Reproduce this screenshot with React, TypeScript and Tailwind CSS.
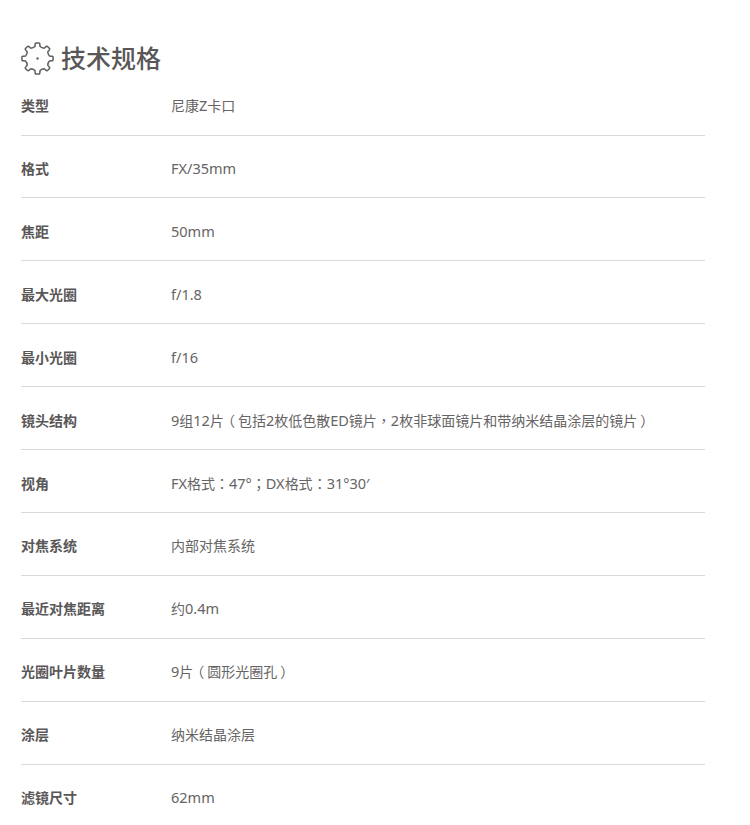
import type { ReactNode } from "react";

const PUNCT = "font-['Noto_Sans_CJK_TC',sans-serif]";

const P = ({ c }: { c: string }) => <span className={PUNCT}>{c}</span>;
const L = () => (
  <span className={`${PUNCT} [font-feature-settings:'halt'] ml-[4px] mr-[3px]`}>（</span>
);
const R = () => (
  <span className={`${PUNCT} [font-feature-settings:'halt'] ml-[3px] mr-[4px]`}>）</span>
);

// Latin runs sit slightly larger than the CJK around them in the reference.
const T = ({ s }: { s: string }) => (
  <>
    {s.split(/([\x20-\x7e°′]+)/).map((part, i) =>
      i % 2 === 1 ? (
        <span key={i} className="text-[14.5px]">
          {part}
        </span>
      ) : (
        part
      ),
    )}
  </>
);

const rows: [string, ReactNode][] = [
  ["类型", <T s="尼康Z卡口" />],
  ["格式", <T s="FX/35mm" />],
  ["焦距", <T s="50mm" />],
  ["最大光圈", <T s="f/1.8" />],
  ["最小光圈", <T s="f/16" />],
  ["镜头结构", <><T s="9组12片" /><L /><T s="包括2枚低色散ED镜片" /><P c="，" /><T s="2枚非球面镜片和带纳米结晶涂层的镜片" /><R /></>],
  ["视角", <><T s="FX格式" /><P c="：" /><T s="47°" /><P c="；" /><T s="DX格式" /><P c="：" /><T s="31°30′" /></>],
  ["对焦系统", "内部对焦系统"],
  ["最近对焦距离", <T s="约0.4m" />],
  ["光圈叶片数量", <><T s="9片" /><L />圆形光圈孔<R /></>],
  ["涂层", "纳米结晶涂层"],
  ["滤镜尺寸", <T s="62mm" />],
];

function gearPath() {
  const teeth = 8;
  const c = 16.5;
  const step = (2 * Math.PI) / teeth;
  const at = (r: number, t: number) =>
    `${(c + r * Math.cos(t)).toFixed(2)} ${(c + r * Math.sin(t)).toFixed(2)}`;
  const out: string[] = [];
  for (let i = 0; i < teeth; i++) {
    const a = i * step - Math.PI / 2;
    out.push(`${i === 0 ? "M" : "L"}${at(12.2, a - step * 0.27)}`);
    out.push(`L${at(14.2, a - step * 0.21)}`);
    out.push(`Q${at(15.9, a - step * 0.2)} ${at(15.6, a - step * 0.08)}`);
    out.push(`L${at(15.6, a + step * 0.08)}`);
    out.push(`Q${at(15.9, a + step * 0.2)} ${at(14.2, a + step * 0.21)}`);
    out.push(`L${at(12.2, a + step * 0.27)}`);
    out.push(`Q${at(11.2, a + step * 0.5)} ${at(12.2, a + step * 0.73)}`);
  }
  return out.join(" ") + "Z";
}

export default function App() {
  return (
    <div className="w-[750px] h-[825px] overflow-hidden bg-white pl-[21px] pr-[45px] pt-[40px] text-[#666464] font-['Noto_Sans','Noto_Sans_CJK_SC',sans-serif]">
      <div className="flex items-center h-[36px] gap-[7px]">
        <svg width="33" height="33" viewBox="0 0 33 33" fill="none" stroke="#5f5d5d" strokeWidth="1.5" strokeLinejoin="round">
          <path d={gearPath()} />
          <circle cx="16.5" cy="16.5" r="1.2" fill="#666464" stroke="none" />
        </svg>
        <h2 className="text-[25px] leading-[36px] font-medium text-[#595757]">技术规格</h2>
      </div>
      <div>
        {rows.map(([k, v], i) => (
          <div
            key={k}
            className={`flex items-center text-[14px] ${i === 0 ? "h-[60px]" : i === 1 ? "h-[62px] pt-[4px]" : i < 7 ? "h-[63px] pt-[4px]" : "h-[63px] pt-[2px]"} ${i < rows.length - 1 ? "border-b border-[#d9d9d9]" : ""}`}
          >
            <div className="w-[150px] font-bold text-[#595757]">{k}</div>
            <div className={(i >= 2 && i <= 6) || i === 8 || i === 9 ? "pt-[2px]" : ""}>{v}</div>
          </div>
        ))}
      </div>
    </div>
  );
}
